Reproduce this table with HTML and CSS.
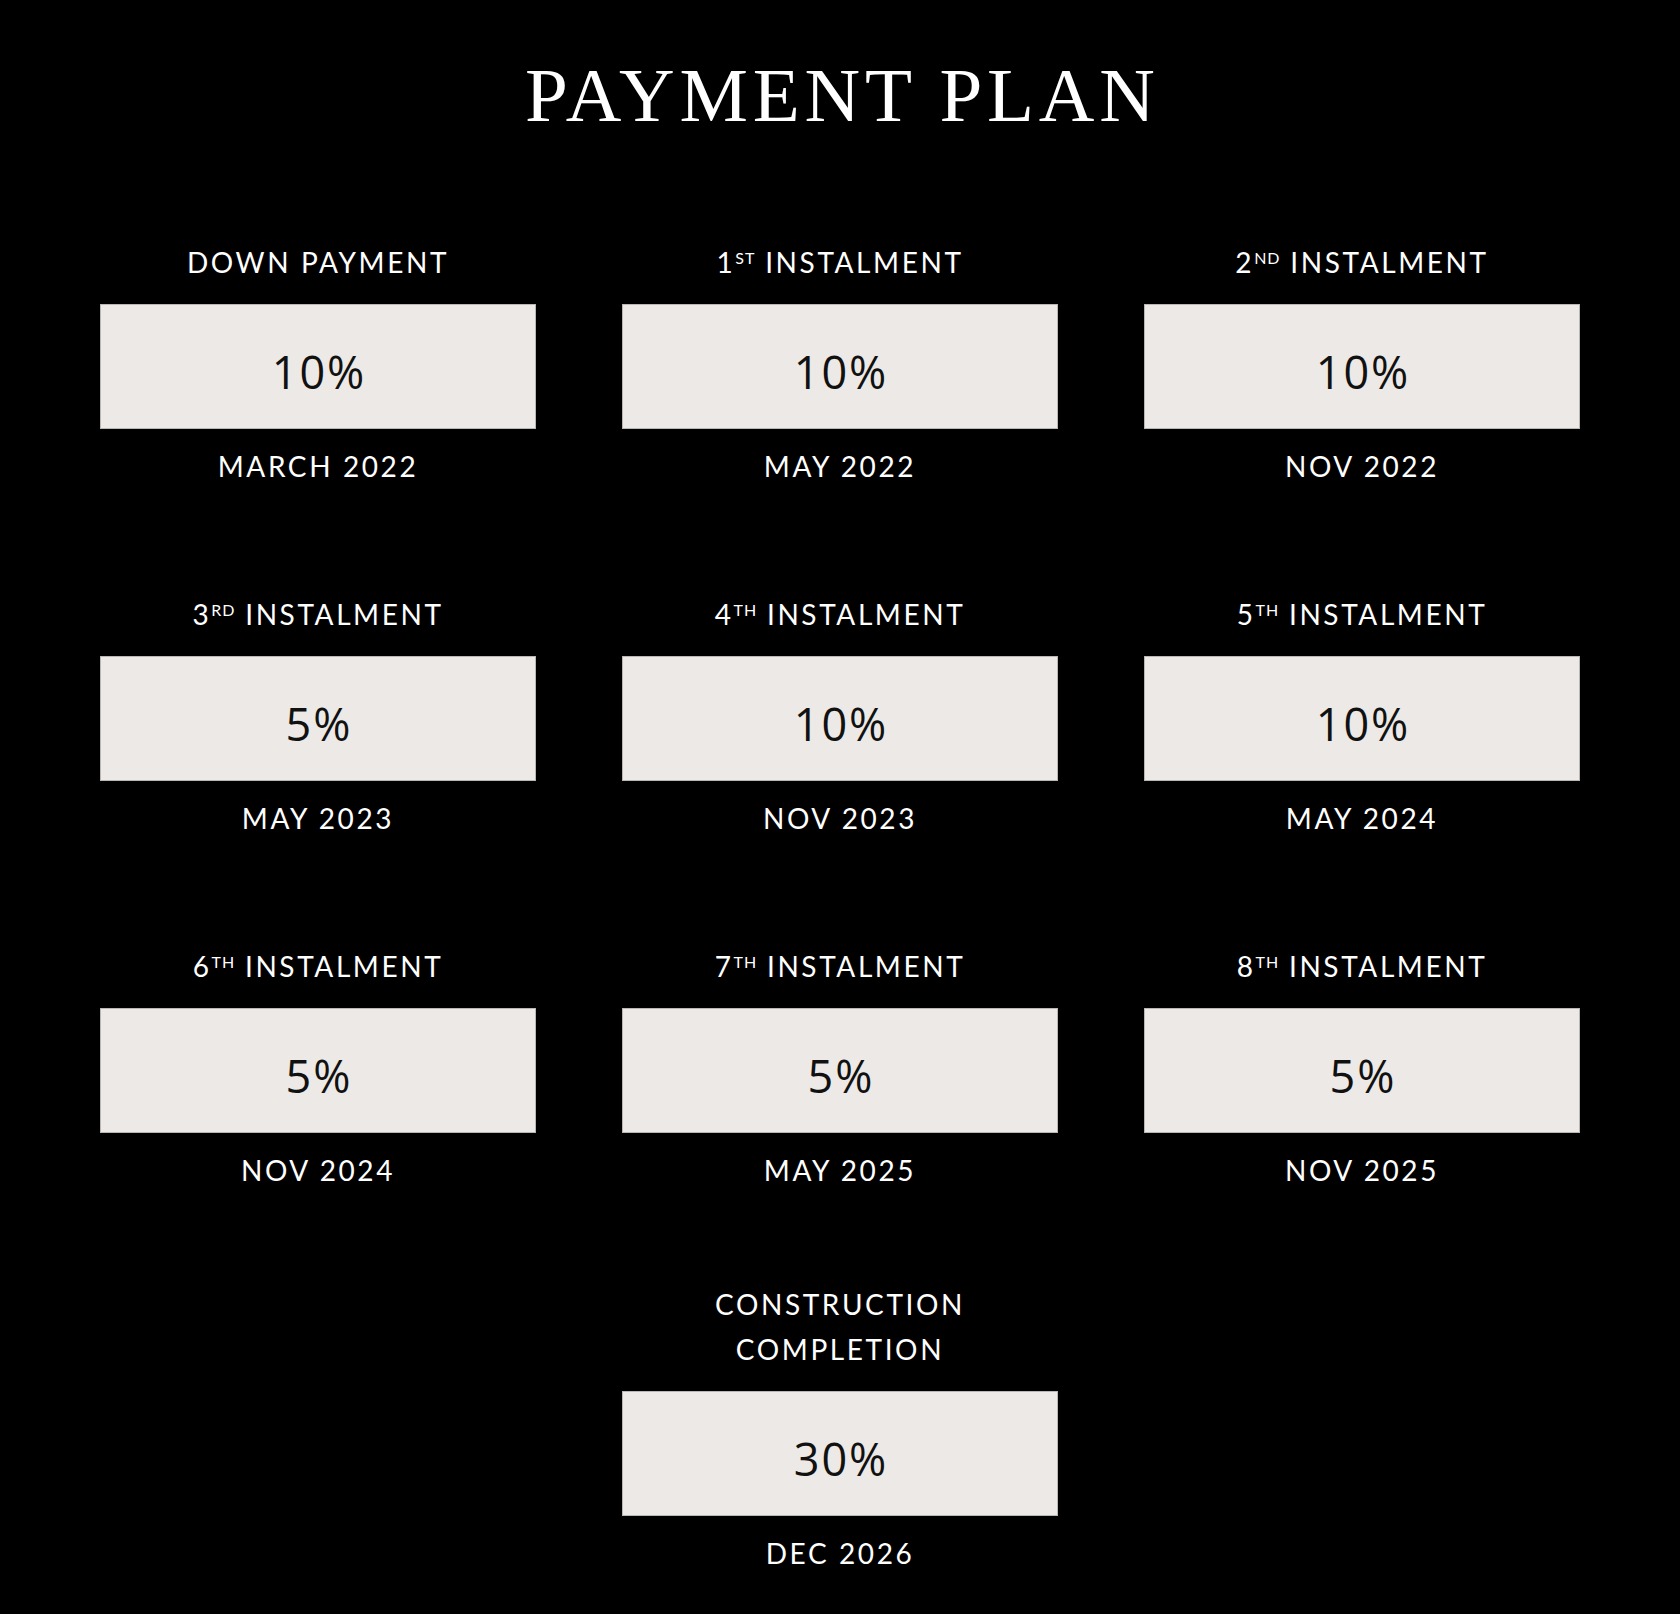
FILE: index.html
```html
<!DOCTYPE html>
<html lang="en">
<head>
<meta charset="utf-8">
<title>Payment Plan</title>
<link rel="stylesheet" href="styles.css">
</head>
<body>
<main class="page">
  <h1 class="title">PAYMENT PLAN</h1>
  <section class="plan-grid">
    <div class="step">
      <div class="label">DOWN PAYMENT</div>
      <div class="amount">10%</div>
      <div class="date">MARCH 2022</div>
    </div>
    <div class="step">
      <div class="label">1<span class="ord">ST</span> INSTALMENT</div>
      <div class="amount">10%</div>
      <div class="date">MAY 2022</div>
    </div>
    <div class="step">
      <div class="label">2<span class="ord">ND</span> INSTALMENT</div>
      <div class="amount">10%</div>
      <div class="date">NOV 2022</div>
    </div>
    <div class="step">
      <div class="label">3<span class="ord">RD</span> INSTALMENT</div>
      <div class="amount">5%</div>
      <div class="date">MAY 2023</div>
    </div>
    <div class="step">
      <div class="label">4<span class="ord">TH</span> INSTALMENT</div>
      <div class="amount">10%</div>
      <div class="date">NOV 2023</div>
    </div>
    <div class="step">
      <div class="label">5<span class="ord">TH</span> INSTALMENT</div>
      <div class="amount">10%</div>
      <div class="date">MAY 2024</div>
    </div>
    <div class="step">
      <div class="label">6<span class="ord">TH</span> INSTALMENT</div>
      <div class="amount">5%</div>
      <div class="date">NOV 2024</div>
    </div>
    <div class="step">
      <div class="label">7<span class="ord">TH</span> INSTALMENT</div>
      <div class="amount">5%</div>
      <div class="date">MAY 2025</div>
    </div>
    <div class="step">
      <div class="label">8<span class="ord">TH</span> INSTALMENT</div>
      <div class="amount">5%</div>
      <div class="date">NOV 2025</div>
    </div>
  </section>
  <section class="final">
    <div class="step">
      <div class="label">CONSTRUCTION<br>COMPLETION</div>
      <div class="amount">30%</div>
      <div class="date">DEC 2026</div>
    </div>
  </section>
</main>
</body>
</html>
```

FILE: styles.css
```css
html, body {
  margin: 0;
  padding: 0;
  background: #000;
}

.page {
  min-height: 1614px;
  padding-top: 57px;
  box-sizing: border-box;
  color: #fff;
}

.title {
  margin: 0;
  text-align: center;
  font-family: "Liberation Serif", "Times New Roman", serif;
  font-weight: 400;
  font-size: 77px;
  line-height: 77px;
  letter-spacing: 4.8px;
  text-indent: 4.8px;
  color: #fff;
}

.plan-grid {
  display: grid;
  grid-template-columns: repeat(3, 436px);
  column-gap: 86px;
  row-gap: 103px;
  justify-content: center;
  margin-top: 106px;
}

.final {
  display: flex;
  justify-content: center;
  margin-top: 89px;
}

.step {
  width: 436px;
  display: flex;
  flex-direction: column;
  align-items: center;
  text-align: center;
}

.label,
.date {
  font-family: Lato, "Liberation Sans", sans-serif;
  font-size: 28px;
  line-height: 45px;
  letter-spacing: 2.6px;
  color: #fff;
  white-space: nowrap;
}

.label {
  margin-bottom: 19px;
}

.date {
  margin-top: 15px;
}

.ord {
  font-size: 16px;
  line-height: 1;
  vertical-align: 9px;
  letter-spacing: 1px;
}

.amount {
  box-sizing: border-box;
  width: 436px;
  height: 125px;
  padding-top: 44px;
  background: #ece9e6;
  border: 1px solid #b9b6b3;
  font-family: "Open Sans", "Noto Sans", sans-serif;
  font-size: 45px;
  line-height: 45px;
  letter-spacing: 2px;
  text-indent: 2px;
  color: #111;
  text-align: center;
}
```
